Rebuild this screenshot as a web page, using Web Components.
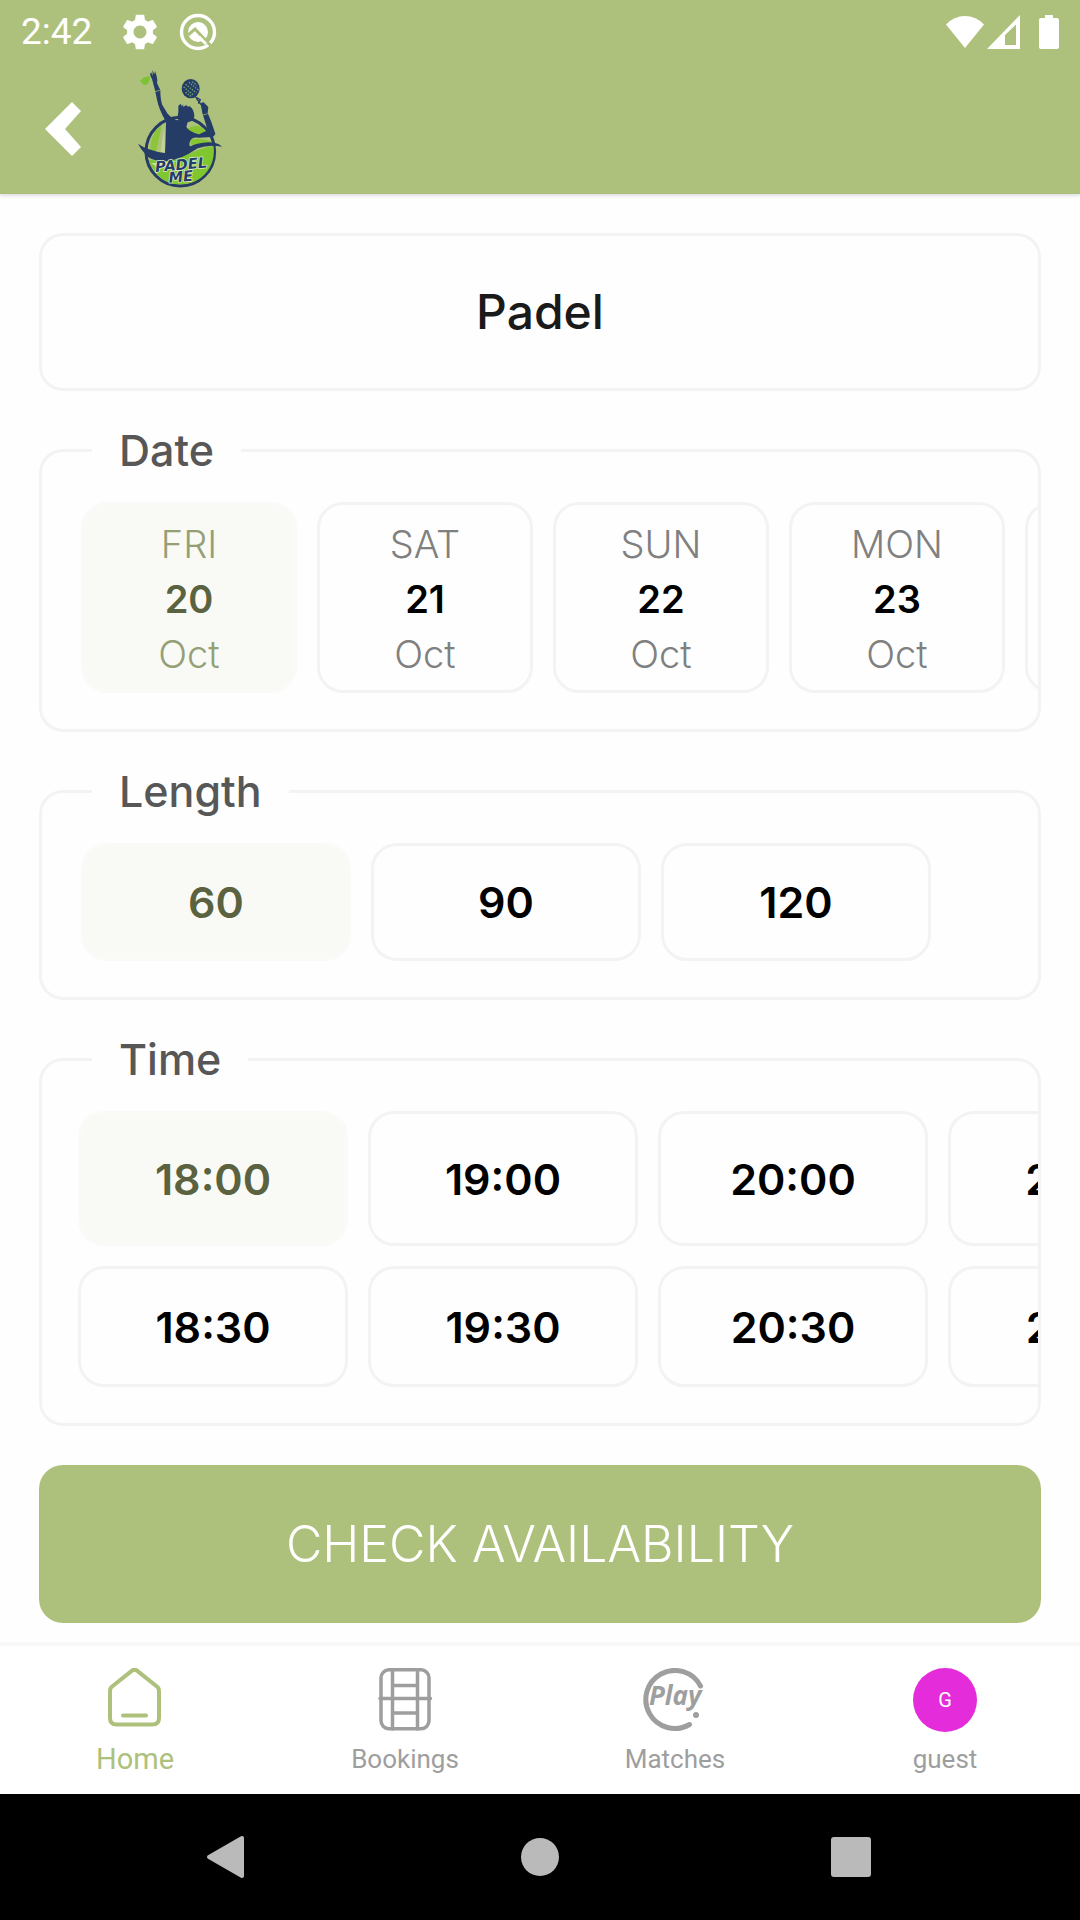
<!DOCTYPE html>
<html lang="en">
<head>
<meta charset="utf-8">
<meta name="viewport" content="width=device-width, initial-scale=1">
<title>Padel Me</title>
<style>
  html { --green: #aec17c; --line: #f3f3f3; --page: #fefefe; --grey: #9e9e9e; }
  body {
    margin: 0; min-height: 100vh; display: flex; flex-direction: column;
    background: var(--page); color: #000;
    font-family: Inter, "Noto Sans", sans-serif;
  }
  main { flex: 1; display: flex; flex-direction: column; gap: 35px; padding: 39px; }
</style>
</head>
<body>
<app-header time="2:42"></app-header>
<main>
  <title-card>Padel</title-card>
  <option-group label="Date">
    <date-chip selected><span slot="day">FRI</span>20<span slot="month">Oct</span></date-chip>
    <date-chip><span slot="day">SAT</span>21<span slot="month">Oct</span></date-chip>
    <date-chip><span slot="day">SUN</span>22<span slot="month">Oct</span></date-chip>
    <date-chip><span slot="day">MON</span>23<span slot="month">Oct</span></date-chip>
    <date-chip></date-chip>
  </option-group>
  <option-group label="Length">
    <slot-chip selected>60</slot-chip>
    <slot-chip>90</slot-chip>
    <slot-chip>120</slot-chip>
  </option-group>
  <option-group label="Time" rows>
    <slot-chip selected>18:00</slot-chip>
    <slot-chip>18:30</slot-chip>
    <slot-chip>19:00</slot-chip>
    <slot-chip>19:30</slot-chip>
    <slot-chip>20:00</slot-chip>
    <slot-chip>20:30</slot-chip>
    <slot-chip>21:00</slot-chip>
    <slot-chip>21:30</slot-chip>
  </option-group>
</main>
<primary-action>CHECK AVAILABILITY</primary-action>
<tab-bar>
  <tab-item active>
    <svg slot="icon" viewBox="0 0 64 64" fill="none" stroke="currentColor" stroke-width="4" stroke-linecap="round" stroke-linejoin="round"><path d="M8.500 19 29 2.600Q31.500 .6 34 2.600L54.500 19Q56 20.500 56 23V50Q56 56.500 49.500 56.500H13.500Q7 56.500 7 50V23Q7 20.500 8.500 19ZM20 47.500H43" /></svg>
    Home</tab-item>
  <tab-item>
    <svg slot="icon" viewBox="0 0 64 64" fill="none" stroke="currentColor" stroke-width="3.500" stroke-linecap="round"><rect x="8" y="1.800" width="48" height="59" rx="8"/><path d="M19.500 2V61M44.500 2V61M19.500 17.500H44M19.500 45H44M7 30.500H57.500"/></svg>
    Bookings</tab-item>
  <tab-item>
    <svg slot="icon" viewBox="0 0 64 64"><path d="M57.500 18A29 29 0 1 0 46.500 56.500" fill="none" stroke="currentColor" stroke-width="5" stroke-linecap="round"/><text x="6" y="37" font-family="Open Sans, sans-serif" font-size="26" font-weight="700" font-style="italic" fill="currentColor">Play</text><circle cx="53" cy="47" r="3" fill="currentColor"/></svg>
    Matches</tab-item>
  <tab-item>
    <user-avatar slot="icon">G</user-avatar>
    guest</tab-item>
</tab-bar>
<system-nav></system-nav>

<script>
const define = (name, html, ready) => customElements.define(name, class extends HTMLElement {
  constructor() {
    super();
    const t = document.createElement('template');
    t.innerHTML = `<style>*{box-sizing:border-box}svg{display:block}button{margin:0;padding:0;border:0;background:none;font:inherit;color:inherit}</style>` + html;
    this.attachShadow({ mode: 'open' }).append(t.content.cloneNode(true));
    if (ready) ready(this, this.shadowRoot);
  }
});

define('status-bar', `
  <style>
    :host { display: flex; align-items: center; height: 63px; padding: 0 21px; color: #fff; }
    .time { font: 37px/44px Roboto, sans-serif; margin-right: 30px; }
    .notes { display: flex; gap: 21px; }
    .radio { display: flex; align-items: center; margin-left: auto; }
    .radio svg + svg { margin-left: 2px; }
    .radio svg.bat { margin-left: 19px; }
  </style>
  <span class="time"></span>
  <span class="notes">
    <svg width="36" height="38" viewBox="2 1.500 20 21" fill="#fff"><path d="M19.140 12.940c.04-.3.060-.61.060-.94 0-.32-.02-.64-.07-.94l2.030-1.580a.49.49 0 0 0 .12-.61l-1.920-3.320a.488.488 0 0 0-.59-.22l-2.390.96c-.5-.38-1.030-.7-1.620-.94l-.36-2.540a.484.484 0 0 0-.48-.41h-3.840c-.24 0-.43.17-.47.41l-.36 2.540c-.59.24-1.130.57-1.620.94l-2.390-.96c-.22-.08-.47 0-.59.22L2.740 8.870c-.12.21-.08.47.12.61l2.030 1.580c-.05.3-.09.63-.09.94s.02.64.07.94l-2.030 1.580a.49.49 0 0 0-.12.61l1.920 3.320c.12.22.37.29.59.22l2.390-.96c.5.38 1.030.7 1.620.94l.36 2.540c.05.24.24.41.48.41h3.840c.24 0 .44-.17.47-.41l.36-2.540c.59-.24 1.130-.56 1.620-.94l2.390.96c.22.08.47 0 .59-.22l1.920-3.320c.12-.22.07-.47-.12-.61l-2.010-1.580zM12 15.600c-1.980 0-3.600-1.620-3.600-3.600s1.620-3.600 3.600-3.600 3.600 1.620 3.600 3.600-1.620 3.600-3.600 3.600z"/></svg>
    <svg width="38" height="38" viewBox="0 0 38 38" fill="none"><circle cx="19" cy="19" r="16.500" stroke="#fff" stroke-width="3.400"/><circle cx="19" cy="19" r="10" fill="#fff"/><path d="M9 22 16 16 34 35" stroke="var(--green)" stroke-width="3"/><path d="M20 24 27 31" stroke="#fff" stroke-width="3"/></svg>
  </span>
  <span class="radio">
    <svg width="40" height="34" viewBox="0 0 40 34"><path d="M20 33 1 9.500Q9 1 20 1T39 9.500Z" fill="#fff"/></svg>
    <svg width="33" height="34" viewBox="0 0 33 34"><path fill-rule="evenodd" d="M0 34 33 0V34ZM29 9.500 18 20V30H29Z" fill="#fff"/></svg>
    <svg class="bat" width="20" height="34" viewBox="0 0 20 34"><path d="M6 0H14V3H18Q20 3 20 5V32Q20 34 18 34H2Q0 34 0 32V5Q0 3 2 3H6Z" fill="#fff"/></svg>
  </span>`, (el, root) => { root.querySelector('.time').textContent = el.getAttribute('time'); });

define('brand-logo', `
  <style>:host { display: block; } text { font: italic 700 44px "DejaVu Sans", sans-serif; }</style>
  <svg width="87" height="120" viewBox="410 208 261 360" role="img" aria-label="Padel Me">
    <path d="M419 243 430 234 446 229 449 238 442 254 430 256Z" fill="#77c22d" opacity=".9"/>
    <circle cx="540" cy="456" r="103" fill="#aec17c" stroke="#253d66" stroke-width="9"/>
    <path d="M450 452Q450 400 484 377Q480 400 468 452Q460 462 450 452Z" fill="#8bc53a"/>
    <path d="M492 385Q484 420 480 462L494 462Z" fill="#c3d29b"/>
    <path d="M560 388Q590 368 616 392L610 404 570 398ZM570 420Q600 414 636 428L600 432 572 436Z" fill="#86c52f"/>
    <path d="M446 480Q510 490 560 466T640 440Q646 500 600 536Q560 562 510 550Q462 532 446 480Z" fill="#7fc62f"/>
    <path d="M452 490Q500 492 540 482L470 502Z" fill="#dce8c4" opacity=".8"/>
    <path d="M455 238Q446 224 452 218L458 228 455 211 462 224 464 213 469 230Q472 240 470 250L480 272Q480 300 486 316L502 342Q518 360 534 362Q530 348 534 338L534 318 542 312 544 320Q552 310 548 322L560 315Q556 322 568 320Q582 330 582 350Q580 366 562 368L558 382Q568 398 596 404L622 392 606 340 602 318Q600 308 610 308L624 322 622 340Q634 366 645 402Q640 414 630 412L596 414Q572 410 568 428Q564 446 578 436Q630 420 656 434L665 441Q624 434 592 446Q540 482 498 484Q450 486 434 462Q420 446 413 432Q440 452 494 460Q496 420 497 366Q476 330 470 300L464 272Z" fill="#253d66"/>
    <path d="M463 276 480 272M608 346 622 342" stroke="#aec17c" stroke-width="2"/>
    <ellipse cx="571" cy="267" rx="27" ry="29" fill="#253d66"/>
    <g fill="none" stroke="#79ac75" stroke-width="4" stroke-dasharray="4 4"><path d="M556 254 588 280M550 262 580 287M566 248 594 271M556 278 572 290M576 246 590 257"/></g>
    <path d="M582 290 600 300 594 312M588 296 608 322" fill="none" stroke="#253d66" stroke-width="4"/>
    <g transform="rotate(-5 545 510)" fill="#253d66" stroke="#e8f0da" stroke-width="4" paint-order="stroke" stroke-linejoin="round">
      <text x="465" y="510">PADEL</text><text x="503" y="546">ME</text>
    </g>
  </svg>`);

define('app-header', `
  <style>
    :host { display: block; background: var(--green); box-shadow: 0 1px 4px rgba(20,20,80,.2); }
    .bar { display: flex; align-items: center; gap: 52px; height: 131px; padding: 0 41px; }
    svg { display: block; }
  </style>
  <status-bar></status-bar>
  <div class="bar">
    <button aria-label="Back"><svg width="44" height="60" viewBox="0 0 44 60"><path d="M31 3 4 30 31 57 40 48 24 30 40 12Z" fill="#fff"/></svg></button>
    <brand-logo></brand-logo>
  </div>`, (el, root) => { root.querySelector('status-bar').shadowRoot.querySelector('.time').textContent = el.getAttribute('time'); });

define('title-card', `
  <style>
    :host { display: block; border: 3px solid var(--line); border-radius: 24px; }
    h1 { margin: 0; padding: 47px 0; text-align: center; font-size: 48px; line-height: 58px; font-weight: 500; color: #1a1a1a; }
  </style>
  <h1><slot></slot></h1>`);

define('option-group', `
  <style>
    :host { display: block; --inset: 39px; }
    :host([rows]) { --inset: 36px; }
    fieldset { margin: 0; padding: 28px 0 36px; border: 3px solid var(--line); border-radius: 24px; min-width: 0; }
    legend { margin-left: 50px; padding: 0 27px; font-size: 43px; line-height: 48px; font-weight: 500; color: #575757; }
    .row { display: grid; grid-auto-flow: column; justify-content: start; gap: 20px; padding-left: var(--inset); overflow: hidden; }
    :host([rows]) .row { grid-template-rows: 135px 121px; }
  </style>
  <fieldset><legend></legend><div class="row"><slot></slot></div></fieldset>`,
  (el, root) => { root.querySelector('legend').textContent = el.getAttribute('label'); });

const chipStyle = `
    button { display: flex; flex-direction: column; align-items: center; justify-content: center; width: 100%; height: 100%;
      border: 3px solid var(--line); border-radius: 26px; color: #000; font-weight: 600; }
    :host([selected]) button { background: #f9faf6; border-color: #fafbf8; color: #5a6240; }`;
const press = (el, root) => root.querySelector('button').setAttribute('aria-pressed', el.hasAttribute('selected'));

define('date-chip', `
  <style>
    :host { display: block; width: 216px; height: 191px; }
    ${chipStyle}
    button { padding-top: 3px; font-size: 38px; line-height: 55px; }
    .soft { font-weight: 300; color: #808080; }
    :host([selected]) .soft { color: #959f75; }
  </style>
  <button><span class="soft"><slot name="day"></slot></span><span><slot></slot></span><span class="soft"><slot name="month"></slot></span></button>`, press);

define('slot-chip', `
  <style>
    :host { display: block; width: 270px; min-height: 118px; }
    ${chipStyle}
    button { font-size: 43px; line-height: 48px; min-height: 118px; }
  </style>
  <button><slot></slot></button>`, press);

define('primary-action', `
  <style>
    :host { display: block; padding: 0 39px 19px; }
    button { display: block; width: 100%; padding: 51px 0; border-radius: 24px; background: var(--green); color: #fff; font-size: 50px; line-height: 56px; font-weight: 300; }
  </style>
  <button><slot></slot></button>`);

define('user-avatar', `
  <style>:host { display: flex; align-items: center; justify-content: center; width: 64px; height: 64px; border-radius: 50%; background: #e52cda; color: #fff; font: 20px/24px Roboto, sans-serif; }</style>
  <slot></slot>`);

define('tab-bar', `
  <style>
    :host { display: block; border-top: 4px solid #f8f8f8; background: #fff; }
    nav { display: grid; grid-template-columns: repeat(4, 1fr); }
  </style>
  <nav><slot></slot></nav>`);

define('tab-item', `
  <style>
    :host { display: block; color: var(--grey); --size: 26px; }
    :host([active]) { color: var(--green); --size: 29px; }
    a { display: flex; flex-direction: column; align-items: center; gap: 11px; padding: 22px 0 19px; color: inherit; text-decoration: none; font: var(--size)/32px Roboto, sans-serif; }
    ::slotted([slot=icon]) { width: 64px; height: 64px; }
  </style>
  <a href="#"><slot name="icon"></slot><span><slot></slot></span></a>`);

define('system-nav', `
  <style>
    :host { display: flex; height: 126px; padding: 0 72px; background: #000; }
    button { flex: 1; display: flex; align-items: center; justify-content: center; }
  </style>
  <button aria-label="Back"><svg width="48" height="48" viewBox="0 0 48 48"><path d="M5 24 38 5V43Z" fill="#bababa" stroke="#bababa" stroke-width="4" stroke-linejoin="round"/></svg></button>
  <button aria-label="Home"><svg width="48" height="48" viewBox="0 0 48 48"><circle cx="24" cy="24" r="19" fill="#bababa"/></svg></button>
  <button aria-label="Recents"><svg width="48" height="48" viewBox="0 0 48 48"><rect x="3" y="4" width="40" height="40" rx="3" fill="#bababa"/></svg></button>`);
</script>
</body>
</html>
